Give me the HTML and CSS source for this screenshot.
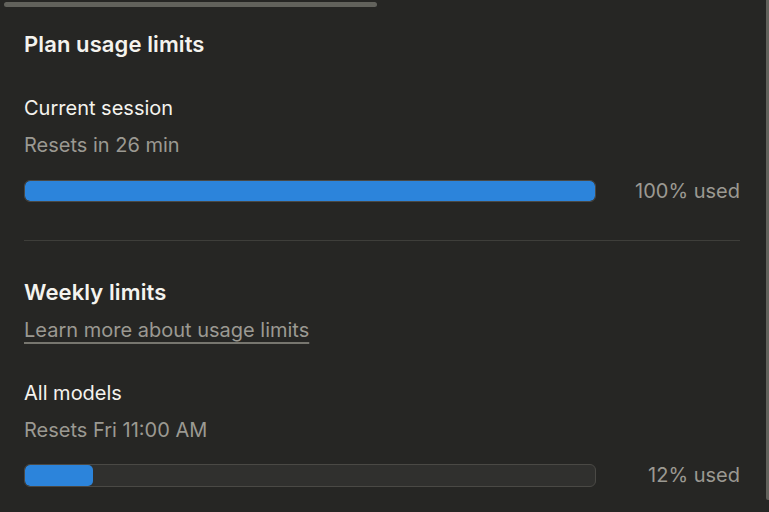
FILE: index.html
```html
<!DOCTYPE html>
<html>
<head>
<meta charset="utf-8">
<link rel="stylesheet" href="styles.css">
</head>
<body>
<div class="hscroll"></div>
<div class="vscroll"></div>
<main class="panel">
  <section class="section">
    <h2 class="title">Plan usage limits</h2>
    <div class="item">
      <div class="label">Current session</div>
      <div class="sub">Resets in 26 min</div>
      <div class="row">
        <div class="track"><div class="fill" style="width:100%"></div></div>
        <div class="pct">100% used</div>
      </div>
    </div>
  </section>
  <hr class="divider">
  <section class="section">
    <h2 class="title">Weekly limits</h2>
    <a class="link" href="#">Learn more about usage limits</a>
    <div class="item item2">
      <div class="label">All models</div>
      <div class="sub">Resets Fri 11:00 AM</div>
      <div class="row row2">
        <div class="track"><div class="fill" style="width:12%"></div></div>
        <div class="pct">12% used</div>
      </div>
    </div>
  </section>
</main>
</body>
</html>
```
FILE: styles.css
```css
html, body {
  margin: 0;
  padding: 0;
  background: #262624;
  width: 769px;
  height: 512px;
  overflow: hidden;
}
body {
  font-family: Inter, "Noto Sans", sans-serif;
  color: #f4f3ee;
  position: relative;
}
.hscroll {
  position: absolute;
  left: 4px;
  top: 2px;
  width: 373px;
  height: 5px;
  border-radius: 3px;
  background: #62625c;
}
.vscroll {
  position: absolute;
  right: 0;
  top: 0;
  width: 3px;
  height: 500px;
  background: #62625c;
  border-bottom-left-radius: 2px;
}
.panel {
  padding: 30px 29px 0 24px;
}
.title {
  margin: 0;
  font-size: 22px;
  line-height: 28px;
  font-weight: 600;
  letter-spacing: 0.1px;
}
.item {
  margin-top: 38px;
}
.label {
  font-size: 20px;
  line-height: 24px;
}
.sub {
  margin-top: 13px;
  font-size: 20px;
  line-height: 24px;
  color: #9b9992;
}
.row {
  margin-top: 22px;
  display: grid;
  grid-template-columns: 572px 1fr;
  align-items: center;
}
.row2 {
  margin-top: 21px;
}
.track {
  height: 22px;
  border: 1px solid #4a4945;
  border-radius: 6px;
  background: #30302e;
  overflow: hidden;
  box-sizing: border-box;
}
.row2 .track {
  height: 23px;
}
.fill {
  height: 100%;
  background: #2c84db;
  border-radius: 5px;
}
.pct {
  font-size: 20px;
  line-height: 24px;
  color: #9b9992;
  white-space: nowrap;
  text-align: right;
}
.divider {
  margin: 37px 0 37px 0;
  border: 0;
  height: 1px;
  background: #3e3e3a;
}
.link {
  display: inline-block;
  margin-top: 12px;
  font-size: 20px;
  line-height: 24px;
  color: #9b9992;
  text-decoration: underline;
  text-decoration-thickness: 1.5px;
  text-underline-offset: 5px;
  text-decoration-color: #77766f;
}
.item2 {
  margin-top: 39px;
}
```
